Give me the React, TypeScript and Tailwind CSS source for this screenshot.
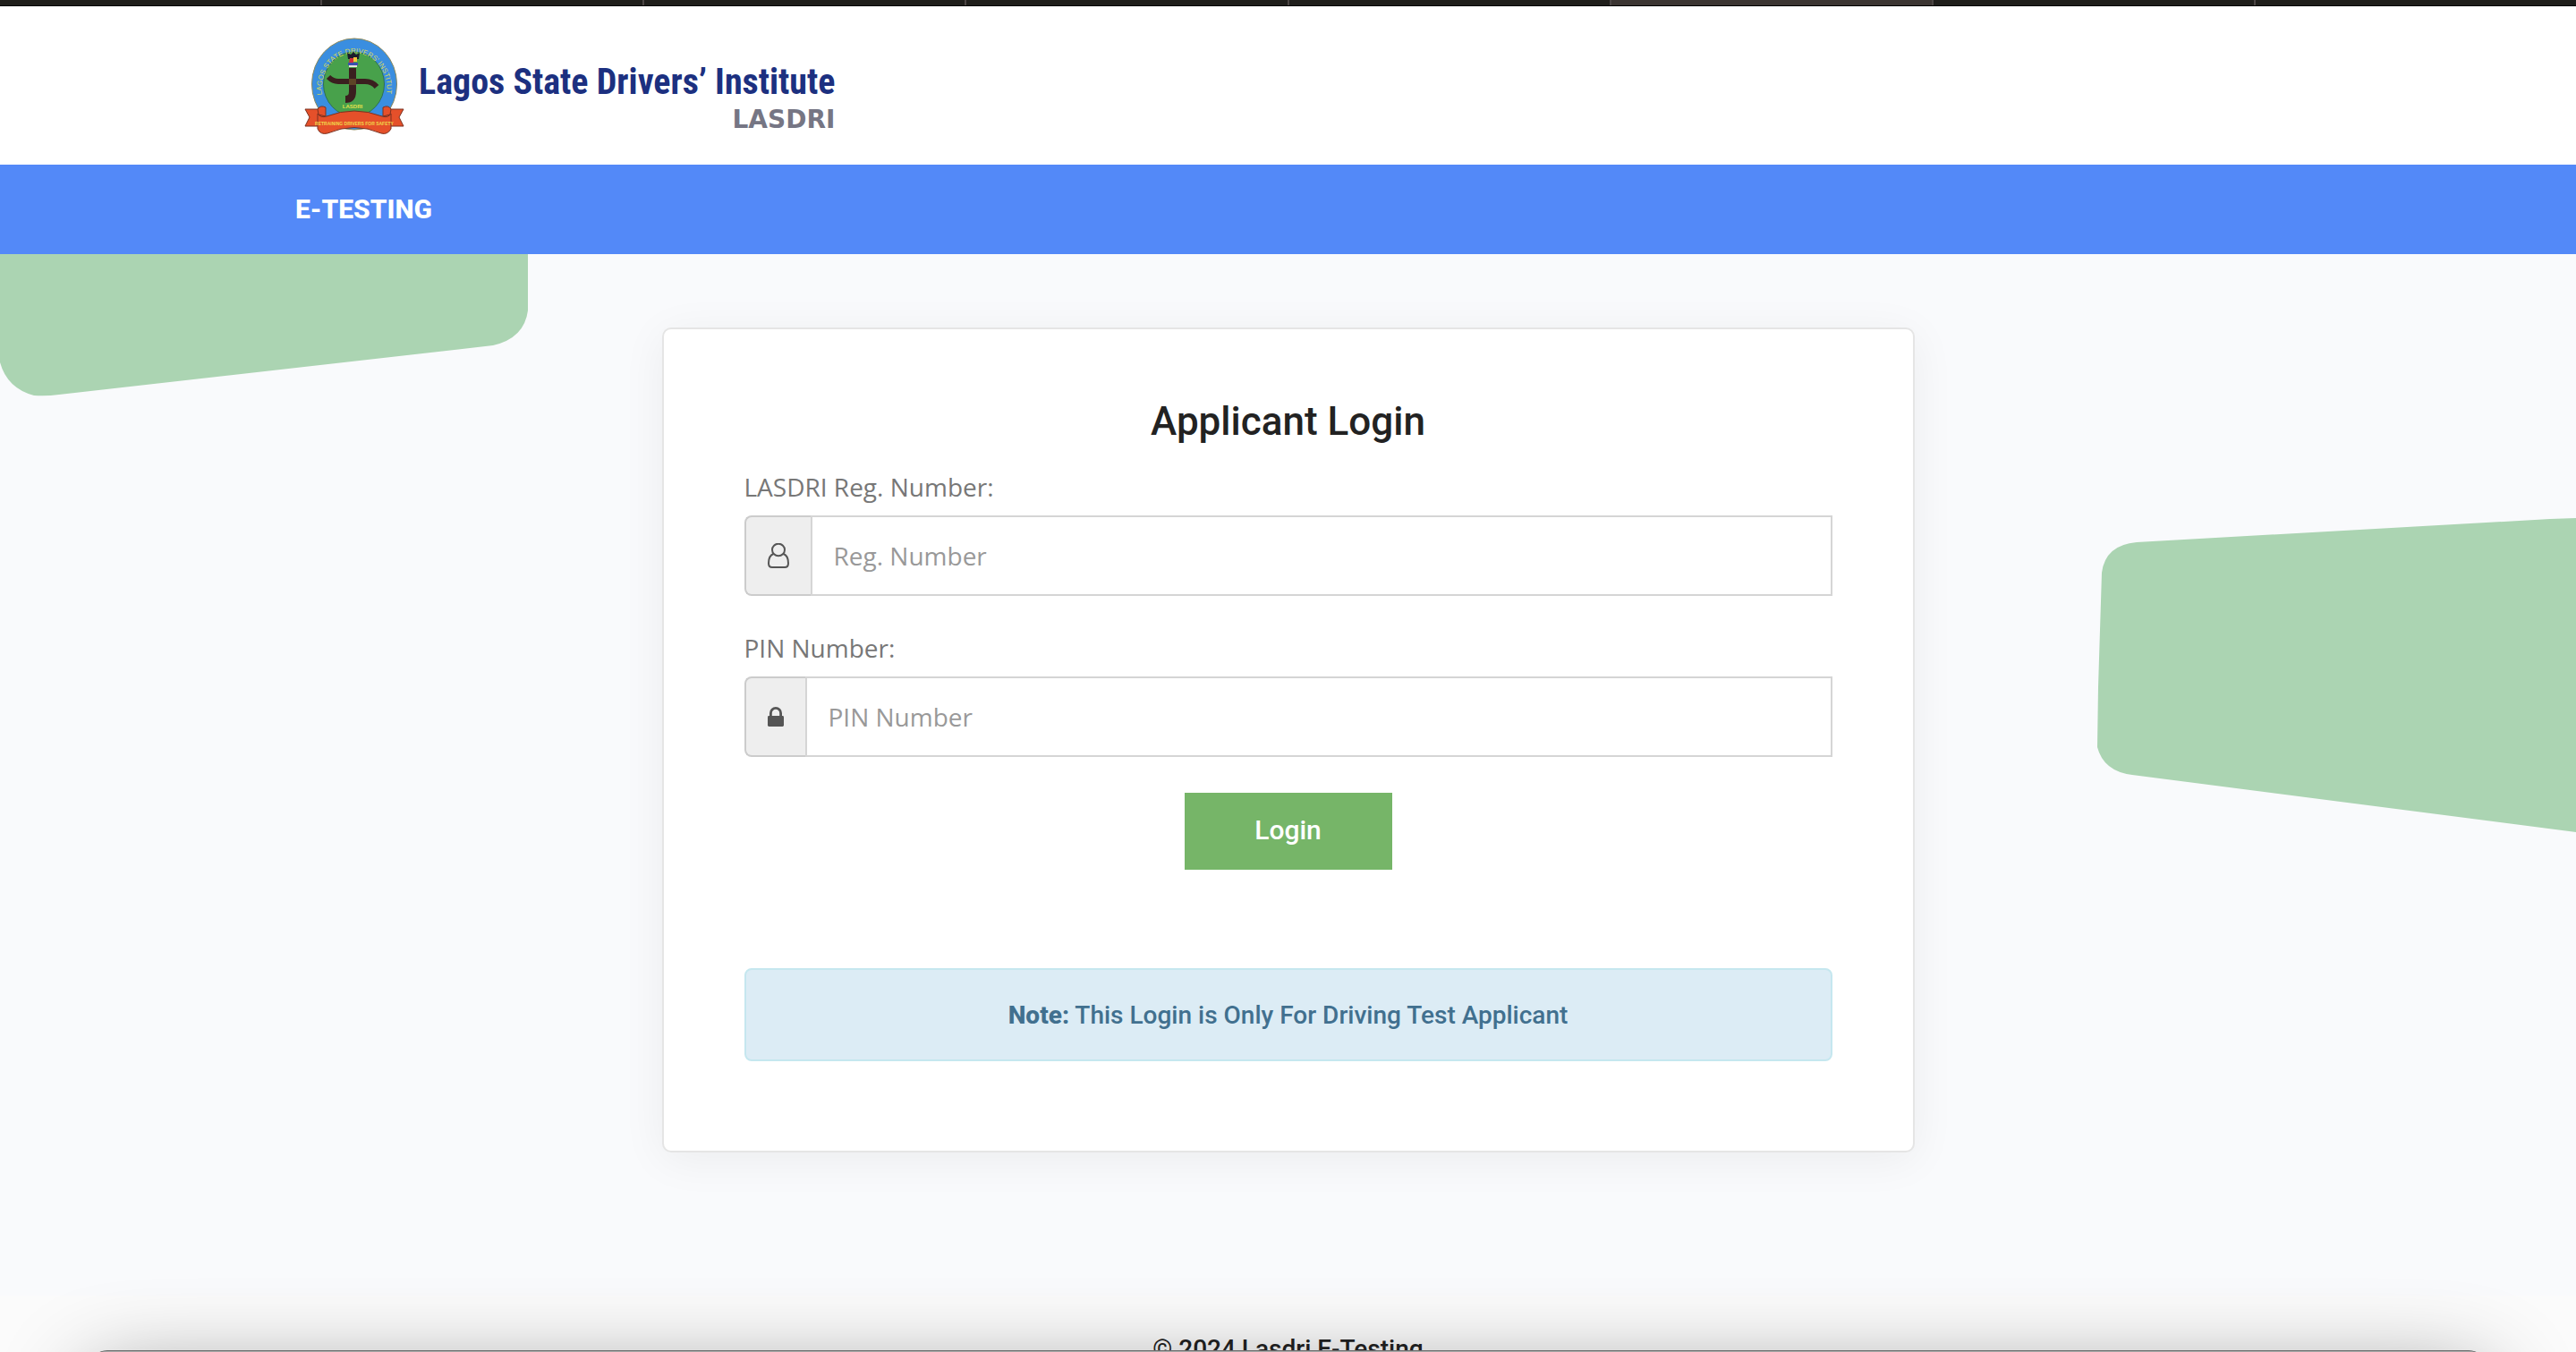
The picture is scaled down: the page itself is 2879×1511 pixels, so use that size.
import React, { useState } from 'react';

const TABS = ['home', 'mail', 'docs', 'portal', 'forms', 'testing', 'search', 'news'];
const ACTIVE_TAB = 'testing';

function Emblem() {
  return (
    <svg viewBox="0 0 130 130" className="w-[130px] h-[130px] shrink-0 overflow-visible" role="img" aria-label="LASDRI emblem">
      <defs>
        <path id="ring-text" d="M30 76 A36.500 40 0 1 1 102 76" />
      </defs>
      <ellipse cx="66" cy="64" rx="47.5" ry="51" fill="#3a8ee0" stroke="#8f8a5c" strokeWidth="1" />
      <ellipse cx="65.5" cy="64" rx="34" ry="36" fill="#48a14b" stroke="#2f6f55" strokeWidth="1" />
      <text fontFamily="Liberation Sans, sans-serif" fontSize="8" fill="#d3d85c">
        <textPath href="#ring-text">LAGOS STATE DRIVERS&apos; INSTITUTE</textPath>
      </text>
      {/* crossroads */}
      <path d="M64 46 V72 Q64 81 56 81" fill="none" stroke="#3a1f1f" strokeWidth="8" />
      <path d="M37 56 Q42 61 48 61 H78 Q86 61 91 67" fill="none" stroke="#3a1f1f" strokeWidth="6" />
      <rect x="60" y="58" width="8" height="7" fill="#5d4426" />
      {/* crest */}
      <path d="M58 29 L62 31 L65 28 L68 31 L72 29 L71 36 H59 Z" fill="#1c1c2b" />
      <path d="M61 35 H65 V40 H60 Z" fill="#d22f3c" />
      <path d="M65 34 H69 V39 H65 Z" fill="#efc53c" />
      <path d="M59 40 H70 V43 H59 Z" fill="#3b4fae" />
      <path d="M60 43 H69 V45 H60 Z" fill="#e9e4df" />
      <text x="64" y="91" textAnchor="middle" fontFamily="Liberation Sans, sans-serif" fontWeight="700" fontSize="6" fill="#e3e04c">
        LASDRI
      </text>
      {/* ribbon */}
      <g fill="#e5502a" stroke="#7a3120" strokeWidth="1">
        <path d="M11 92 H32 V111 H11 L16 101 Z" />
        <path d="M121 92 H100 V111 H121 L116 101 Z" />
        <path d="M25 92 Q28 87 34 90 V100 L26 98 Z" />
        <path d="M107 92 Q104 87 98 90 V100 L106 98 Z" />
        <path d="M25 97 Q28 102 35 100 Q66 88 97 100 Q104 102 107 97 V114 Q103 121 96 119 Q66 106 36 119 Q28 121 25 114 Z" />
      </g>
      <text x="66" y="110" textAnchor="middle" fontFamily="Liberation Sans, sans-serif" fontWeight="700" fontSize="5" fill="#f2d94a">
        RETRAINING DRIVERS FOR SAFETY
      </text>
    </svg>
  );
}

function UserIcon() {
  return (
    <svg viewBox="0 0 24 28" className="w-6 h-7" fill="none" stroke="currentColor" strokeWidth="2" aria-hidden="true">
      <ellipse cx="12" cy="7.5" rx="7" ry="6.8" />
      <path d="M6.5 12 C2 13.500 1 18 1 22.500 C1 25.500 2.800 27 5 27 H19 C21.200 27 23 25.500 23 22.500 C23 18 22 13.500 17.500 12" />
    </svg>
  );
}

function LockIcon() {
  return (
    <svg viewBox="0 0 18 22" className="w-[18px] h-[22px]" aria-hidden="true">
      <path d="M3.400 11 V7 A5.600 5.600 0 0 1 14.600 7 V11" fill="none" stroke="currentColor" strokeWidth="2.800" />
      <rect y="10" width="18" height="12" rx="1.400" fill="currentColor" />
    </svg>
  );
}

interface FieldProps {
  id: string;
  label: string;
  placeholder: string;
  type?: string;
  icon: React.ReactNode;
  value: string;
  onChange: (value: string) => void;
}

function Field({ id, label, placeholder, type = 'text', icon, value, onChange }: FieldProps) {
  return (
    <div className="mb-[38px] font-['Open_Sans',sans-serif] text-[28px] leading-10">
      <label htmlFor={id} className="block mb-3 text-[#777777]">
        {label}
      </label>
      <div className="flex h-[90px]">
        <span className="flex items-center px-6 bg-[#eeeeee] border-2 border-r-0 border-[#cccccc] rounded-l-lg text-[#555555]">
          {icon}
        </span>
        <input
          id={id}
          type={type}
          value={value}
          placeholder={placeholder}
          onChange={(e) => onChange(e.target.value)}
          className="flex-1 min-w-0 px-6 bg-white border-2 border-[#d5d5d5] text-[#555555] placeholder:text-[#999999] outline-none"
        />
      </div>
    </div>
  );
}

export default function App() {
  const [regNumber, setRegNumber] = useState('');
  const [pin, setPin] = useState('');

  return (
    <div className="h-screen overflow-hidden flex flex-col bg-[#fbfbfb] font-['Roboto',sans-serif]">
      {/* Browser tab strip */}
      <div className="flex shrink-0 h-[7px] bg-[#1f1e1b] border-b border-black">
        {TABS.map((tab) => (
          <div
            key={tab}
            className={`flex-1 border-r-2 border-[#4b4544] last:border-r-0 ${tab === ACTIVE_TAB ? 'bg-[#3b3532]' : ''}`}
          />
        ))}
      </div>

      <header className="shrink-0 bg-white">
        <div className="flex h-[177px] pl-[330px] pt-[23px]">
          <Emblem />
          <div className="flex flex-col items-end pl-2 pt-8">
            <span className="font-['Roboto_Condensed','Liberation_Sans_Narrow',sans-serif] font-bold text-[40px] leading-[60px] text-[#1c3080] whitespace-nowrap">
              Lagos State Drivers’ Institute
            </span>
            <span className="font-['DejaVu_Sans',sans-serif] font-bold text-[28px] leading-6 text-[#767684]">LASDRI</span>
          </div>
        </div>
      </header>

      <nav className="flex shrink-0 items-center h-[100px] pl-[330px] bg-[#5389f8]">
        <a href="#" className="text-[30px] leading-10 font-extrabold text-white">
          E-TESTING
        </a>
      </nav>

      <main className="relative shrink-0 px-8 pt-[82px] pb-40 bg-[#f9fafc]">
        {/* Background shapes */}
        <svg viewBox="0 0 592 160" className="absolute left-0 top-0 w-[592px] h-40" aria-hidden="true">
          <path d="M0 0 H590 V63 Q586 94 551 102 L66 157 Q52 159 38 158 Q8 150 0 121 Z" fill="#abd4b2" />
        </svg>
        <svg viewBox="0 0 536 352" className="absolute right-0 top-[295px] w-[536px] h-[352px]" aria-hidden="true">
          <path d="M536 0 L507 1 L45 27 Q10 30 6 61 L2 189 L1 256 Q8 283 40 287 L536 351 Z" fill="#abd4b2" />
        </svg>

        <section className="relative w-full max-w-[1400px] mx-auto px-[90px] pt-[73px] pb-[100px] bg-white border-2 border-[#e5e5e5] rounded-[10px] shadow-[0_8px_50px_rgba(0,0,0,0.06)]">
          <h1 className="mb-[23px] text-[44px] leading-[60px] font-medium text-center text-[#222222]">Applicant Login</h1>
          <form onSubmit={(e) => e.preventDefault()}>
            <Field
              id="reg-number"
              label="LASDRI Reg. Number:"
              placeholder="Reg. Number"
              icon={<UserIcon />}
              value={regNumber}
              onChange={setRegNumber}
            />
            <Field
              id="pin-number"
              label="PIN Number:"
              placeholder="PIN Number"
              type="password"
              icon={<LockIcon />}
              value={pin}
              onChange={setPin}
            />
            <button
              type="submit"
              className="block w-[232px] h-[86px] mt-10 mx-auto pb-0.5 bg-[#76b568] text-white text-[30px] leading-10 font-medium cursor-pointer"
            >
              Login
            </button>
          </form>
          <p
            role="note"
            className="mt-[110px] pt-[31px] pb-[29px] bg-[#dcecf5] border-2 border-[#c5e7ef] rounded-lg text-center text-[28px] leading-10 font-medium text-[#41708f]"
          >
            <strong className="font-extrabold">Note:</strong> This Login is Only For Driving Test Applicant
          </p>
        </section>
      </main>

      <footer className="shrink-0 pt-10 pb-10 text-center text-[28px] leading-10 font-medium text-[#222222]">
        © 2024 Lasdri E-Testing
      </footer>

      {/* Top edge of the window that overlaps the page */}
      <div className="fixed inset-x-[100px] -bottom-40 h-[162px] rounded-t-[20px] bg-[#a9a9a9] border-t border-[#6d6d6d] shadow-[0_30px_100px_rgba(0,0,0,0.45)]" />
    </div>
  );
}
